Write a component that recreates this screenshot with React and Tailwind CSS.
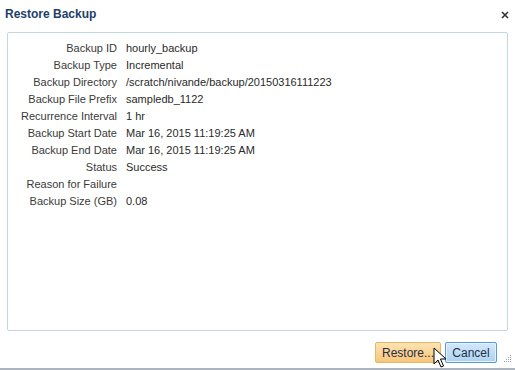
import React from "react";

const details = [
  { label: "Backup ID", value: "hourly_backup" },
  { label: "Backup Type", value: "Incremental" },
  { label: "Backup Directory", value: "/scratch/nivande/backup/20150316111223" },
  { label: "Backup File Prefix", value: "sampledb_1122" },
  { label: "Recurrence Interval", value: "1 hr" },
  { label: "Backup Start Date", value: "Mar 16, 2015 11:19:25 AM" },
  { label: "Backup End Date", value: "Mar 16, 2015 11:19:25 AM" },
  { label: "Status", value: "Success" },
  { label: "Reason for Failure", value: "" },
  { label: "Backup Size (GB)", value: "0.08" },
];

const CloseIcon = () => (
  <svg width="8" height="8" viewBox="0 0 8 8">
    <path d="M1 1 L7 7 M7 1 L1 7" stroke="#333" strokeWidth="1.6" />
  </svg>
);

const Grip = () => (
  <svg width="10" height="10" viewBox="0 0 10 10">
    {[
      [8, 2],
      [6, 4],
      [8, 4],
      [4, 6],
      [6, 6],
      [8, 6],
      [2, 8],
      [4, 8],
      [6, 8],
      [8, 8],
    ].map(([x, y]) => (
      <rect key={`${x}-${y}`} x={x} y={y} width="1" height="1" fill="#9aa3ad" />
    ))}
  </svg>
);

const Cursor = () => (
  <svg width="14" height="22" viewBox="0 0 14 22">
    <path
      d="M1 1 L1 17 L5 13 L8 20 L10.5 19 L7.5 12 L13 12 Z"
      fill="#fff"
      stroke="#000"
      strokeWidth="1"
      strokeLinejoin="round"
    />
  </svg>
);

export default function App() {
  return (
    <div
      className="relative w-[515px] h-[370px] bg-white flex flex-col border-b-2 border-[#aeb4bd]"
      style={{ fontFamily: '"Liberation Sans", Arial, sans-serif' }}
    >
      <div className="h-[32px] flex items-start justify-between pl-[5px] pr-[6px] pt-[6px]">
        <h1 className="text-[12px] leading-[16px] font-bold text-[#1d3e6b]">
          Restore Backup
        </h1>
        <button className="mt-[5px]">
          <CloseIcon />
        </button>
      </div>

      <div className="mx-[7px] h-[299px] border border-[#c5d6e0] rounded-[2px] pt-[7px]">
        <div className="grid grid-cols-[109px_1fr] gap-x-[9px] text-[11px] leading-[17px] text-[#2a2a2a]">
          {details.map((row) => (
            <React.Fragment key={row.label}>
              <div className="text-right text-[#3a3a3a]">{row.label}</div>
              <div>{row.value}</div>
            </React.Fragment>
          ))}
        </div>
      </div>

      <div className="flex justify-end items-start gap-[4px] pr-[18px] pt-[11px]">
        <button className="w-[66px] h-[21px] rounded-[2px] border border-[#e5b66c] bg-gradient-to-b from-[#fde3b0] to-[#f6c679] text-[12px] text-[#2b2b45]">
          Restore...
        </button>
        <button className="w-[52px] h-[21px] rounded-[2px] border border-[#5b9ad6] bg-gradient-to-b from-[#d3e8fa] to-[#acd3f3] text-[12px] text-[#1f2f45] shadow-[inset_0_0_0_1px_#e6f2fc]">
          Cancel
        </button>
      </div>

      <div className="absolute right-[3px] bottom-[5px]">
        <Grip />
      </div>
      <div className="absolute left-[433px] top-[347px]">
        <Cursor />
      </div>
    </div>
  );
}
